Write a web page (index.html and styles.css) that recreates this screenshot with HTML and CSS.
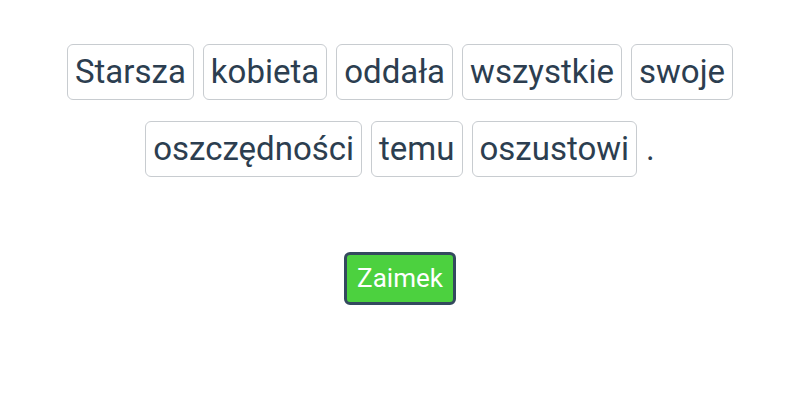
FILE: index.html
```html
<!DOCTYPE html>
<html lang="pl">
<head>
  <meta charset="UTF-8">
  <title>Zdanie</title>
  <link rel="stylesheet" href="styles.css">
</head>
<body>

  <div class="sentence">
    <span class="word">Starsza</span>
    <span class="word">kobieta</span>
    <span class="word">oddała</span>
    <span class="word">wszystkie</span>
    <span class="word">swoje</span>
    <span class="word">oszczędności</span>
    <span class="word">temu</span>
    <span class="word">oszustowi</span>
    <span class="punct">.</span>
  </div>

  <div class="answer">
    <button class="pos-btn">Zaimek</button>
  </div>

</body>
</html>
```

FILE: styles.css
```css
body {
  margin: 0;
  font-family: Roboto, "Noto Sans", sans-serif;
  background: #ffffff;
  color: #2c3e50;
}

.sentence {
  display: flex;
  flex-wrap: wrap;
  justify-content: center;
  align-items: center;
  gap: 21px 9px;
  width: 700px;
  margin: 0 auto;
  padding-top: 44px;
}

.word {
  font-size: 33px;
  line-height: 38px;
  padding: 8px 7px;
  border: 1px solid #c8ccd0;
  border-radius: 6px;
}

.punct {
  font-size: 33px;
  line-height: 38px;
  padding: 8px 0;
}

.answer {
  display: flex;
  justify-content: center;
  padding-top: 75px;
}

.pos-btn {
  font-family: Roboto, "Noto Sans", sans-serif;
  font-size: 26px;
  line-height: 32px;
  color: #ffffff;
  background: #4cd13f;
  border: 3px solid #34495e;
  border-radius: 6px;
  padding: 7px 10px 8px;
  width: 112px;
}
```
